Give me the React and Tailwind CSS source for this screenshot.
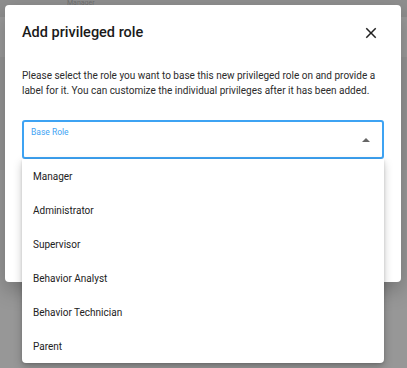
const roles = ["Manager", "Administrator", "Supervisor", "Behavior Analyst", "Behavior Technician", "Parent"];

function CloseIcon() {
  return (
    <svg width="18" height="18" viewBox="0 0 24 24" fill="currentColor">
      <path d="M19 6.41 17.59 5 12 10.59 6.41 5 5 6.41 10.59 12 5 17.59 6.41 19 12 13.41 17.59 19 19 17.59 13.41 12z" />
    </svg>
  );
}

export default function App() {
  return (
    <div className="relative h-[368px] w-[407px] overflow-hidden bg-[#989898] font-['Roboto',sans-serif]">
      {/* page behind the overlay */}
      <div className="flex h-[17px] items-start bg-[#8f8f8f] pl-[67px]">
        <span className="text-[7px] leading-[7px] text-[#6f6f6f]">Manager</span>
      </div>
      <div className="h-[40px] bg-[#9b9b9b]" />
      <div className="h-[113px] bg-[#959595]" />
      <div className="h-[40px] bg-[#9a9a9a]" />
      <div className="h-[158px] bg-[#979797]" />

      {/* dialog */}
      <div className="absolute inset-0 px-[5px] pt-[5px]">
        <div className="h-[277px] w-[396px] rounded-[4px] bg-white shadow-[0_8px_20px_rgba(0,0,0,0.25)]">
          <div className="flex h-[56px] items-center justify-between pl-[17px] pr-[21px]">
            <h2 className="text-[14.5px] font-medium text-[#1a1a1a]">Add privileged role</h2>
            <button className="text-[#222]">
              <CloseIcon />
            </button>
          </div>
          <p className="mt-[7px] px-[17px] text-[10px] leading-[15px] text-[#2b2b2b]">
            Please select the role you want to base this new privileged role on and provide a label for it. You can
            customize the individual privileges after it has been added.
          </p>
          <div className="relative mx-[17px] mt-[22px]">
            <div className="relative h-[39px] rounded-[3px] border-2 border-[#3ea3f3]">
              <span className="absolute left-[7px] top-[4px] text-[8.5px] text-[#3ea3f3]">Base Role</span>
              <span className="absolute right-[12px] top-[16px] h-0 w-0 border-x-[4px] border-b-[4px] border-x-transparent border-b-[#666]" />
            </div>
            <ul className="absolute left-0 top-full z-10 w-[362px] rounded-b-[4px] bg-white shadow-[0_4px_10px_rgba(0,0,0,0.22),0_1px_3px_rgba(0,0,0,0.15)]">
              {roles.map((r) => (
                <li key={r} className="flex h-[34px] items-center px-[11px] text-[10px] text-[#222]">
                  {r}
                </li>
              ))}
            </ul>
          </div>
        </div>
      </div>
    </div>
  );
}
